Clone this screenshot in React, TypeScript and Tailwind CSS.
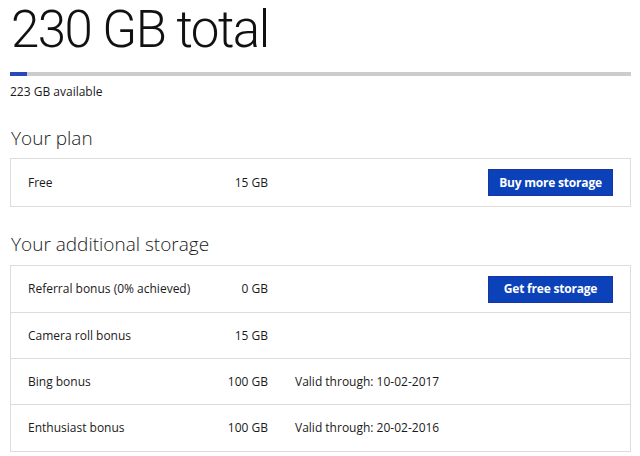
import React from "react";

const font = { fontFamily: '"Open Sans", "Noto Sans", sans-serif' };
const headFont = { fontFamily: 'Roboto, "Open Sans", sans-serif' };

type Row = { label: string; amount: string; extra?: string; button?: string };

function RowView({ r, first }: { r: Row; first?: boolean }) {
  return (
    <div
      className={`flex items-center pl-[17px] pr-[17px] whitespace-nowrap ${first ? "h-[47px]" : "h-[46px]"}`}
    >
      <div className="w-[180px] shrink-0">{r.label}</div>
      <div className="w-[60px] shrink-0 text-right">{r.amount}</div>
      {r.extra && <div className="ml-[27px]">{r.extra}</div>}
      {r.button && (
        <button className="ml-auto h-[27px] w-[125px] bg-[#0b41b9] border border-[#1a35a3] text-white font-bold text-[12px] tracking-[-0.2px] leading-none">
          {r.button}
        </button>
      )}
    </div>
  );
}

export default function App() {
  const extra: Row[] = [
    { label: "Referral bonus (0% achieved)", amount: "0 GB", button: "Get free storage" },
    { label: "Camera roll bonus", amount: "15 GB" },
    { label: "Bing bonus", amount: "100 GB", extra: "Valid through: 10-02-2017" },
    { label: "Enthusiast bonus", amount: "100 GB", extra: "Valid through: 20-02-2016" },
  ];
  return (
    <div
      className="w-[640px] h-[456px] overflow-hidden bg-white text-[#1a1a1a] pl-[10px] pr-[9px] text-[12px]"
      style={font}
    >
      <h1
        className="text-[51px] font-light leading-[60px] pl-[1px] text-[#111] tracking-[-1.5px] whitespace-nowrap"
        style={headFont}
      >
        230 GB total
      </h1>
      <div className="mt-[12px] h-[4px] bg-[#cccccc] flex">
        <div className="w-[17px] h-full bg-[#2a48b8]" />
      </div>
      <div className="mt-[8px] leading-[16px]">223 GB available</div>
      <h2 className="mt-[26px] text-[19px] font-light leading-[24px] pl-[1px]">Your plan</h2>
      <div className="mt-[8px] border border-[#dcdcdc]">
        <RowView r={{ label: "Free", amount: "15 GB", button: "Buy more storage" }} first />
      </div>
      <h2 className="mt-[25px] text-[19px] font-light leading-[24px] pl-[1px]">
        Your additional storage
      </h2>
      <div className="mt-[9px] border border-[#dcdcdc] divide-y divide-[#dcdcdc]">
        {extra.map((r, i) => (
          <RowView key={i} r={r} first={i === 0} />
        ))}
      </div>
    </div>
  );
}
